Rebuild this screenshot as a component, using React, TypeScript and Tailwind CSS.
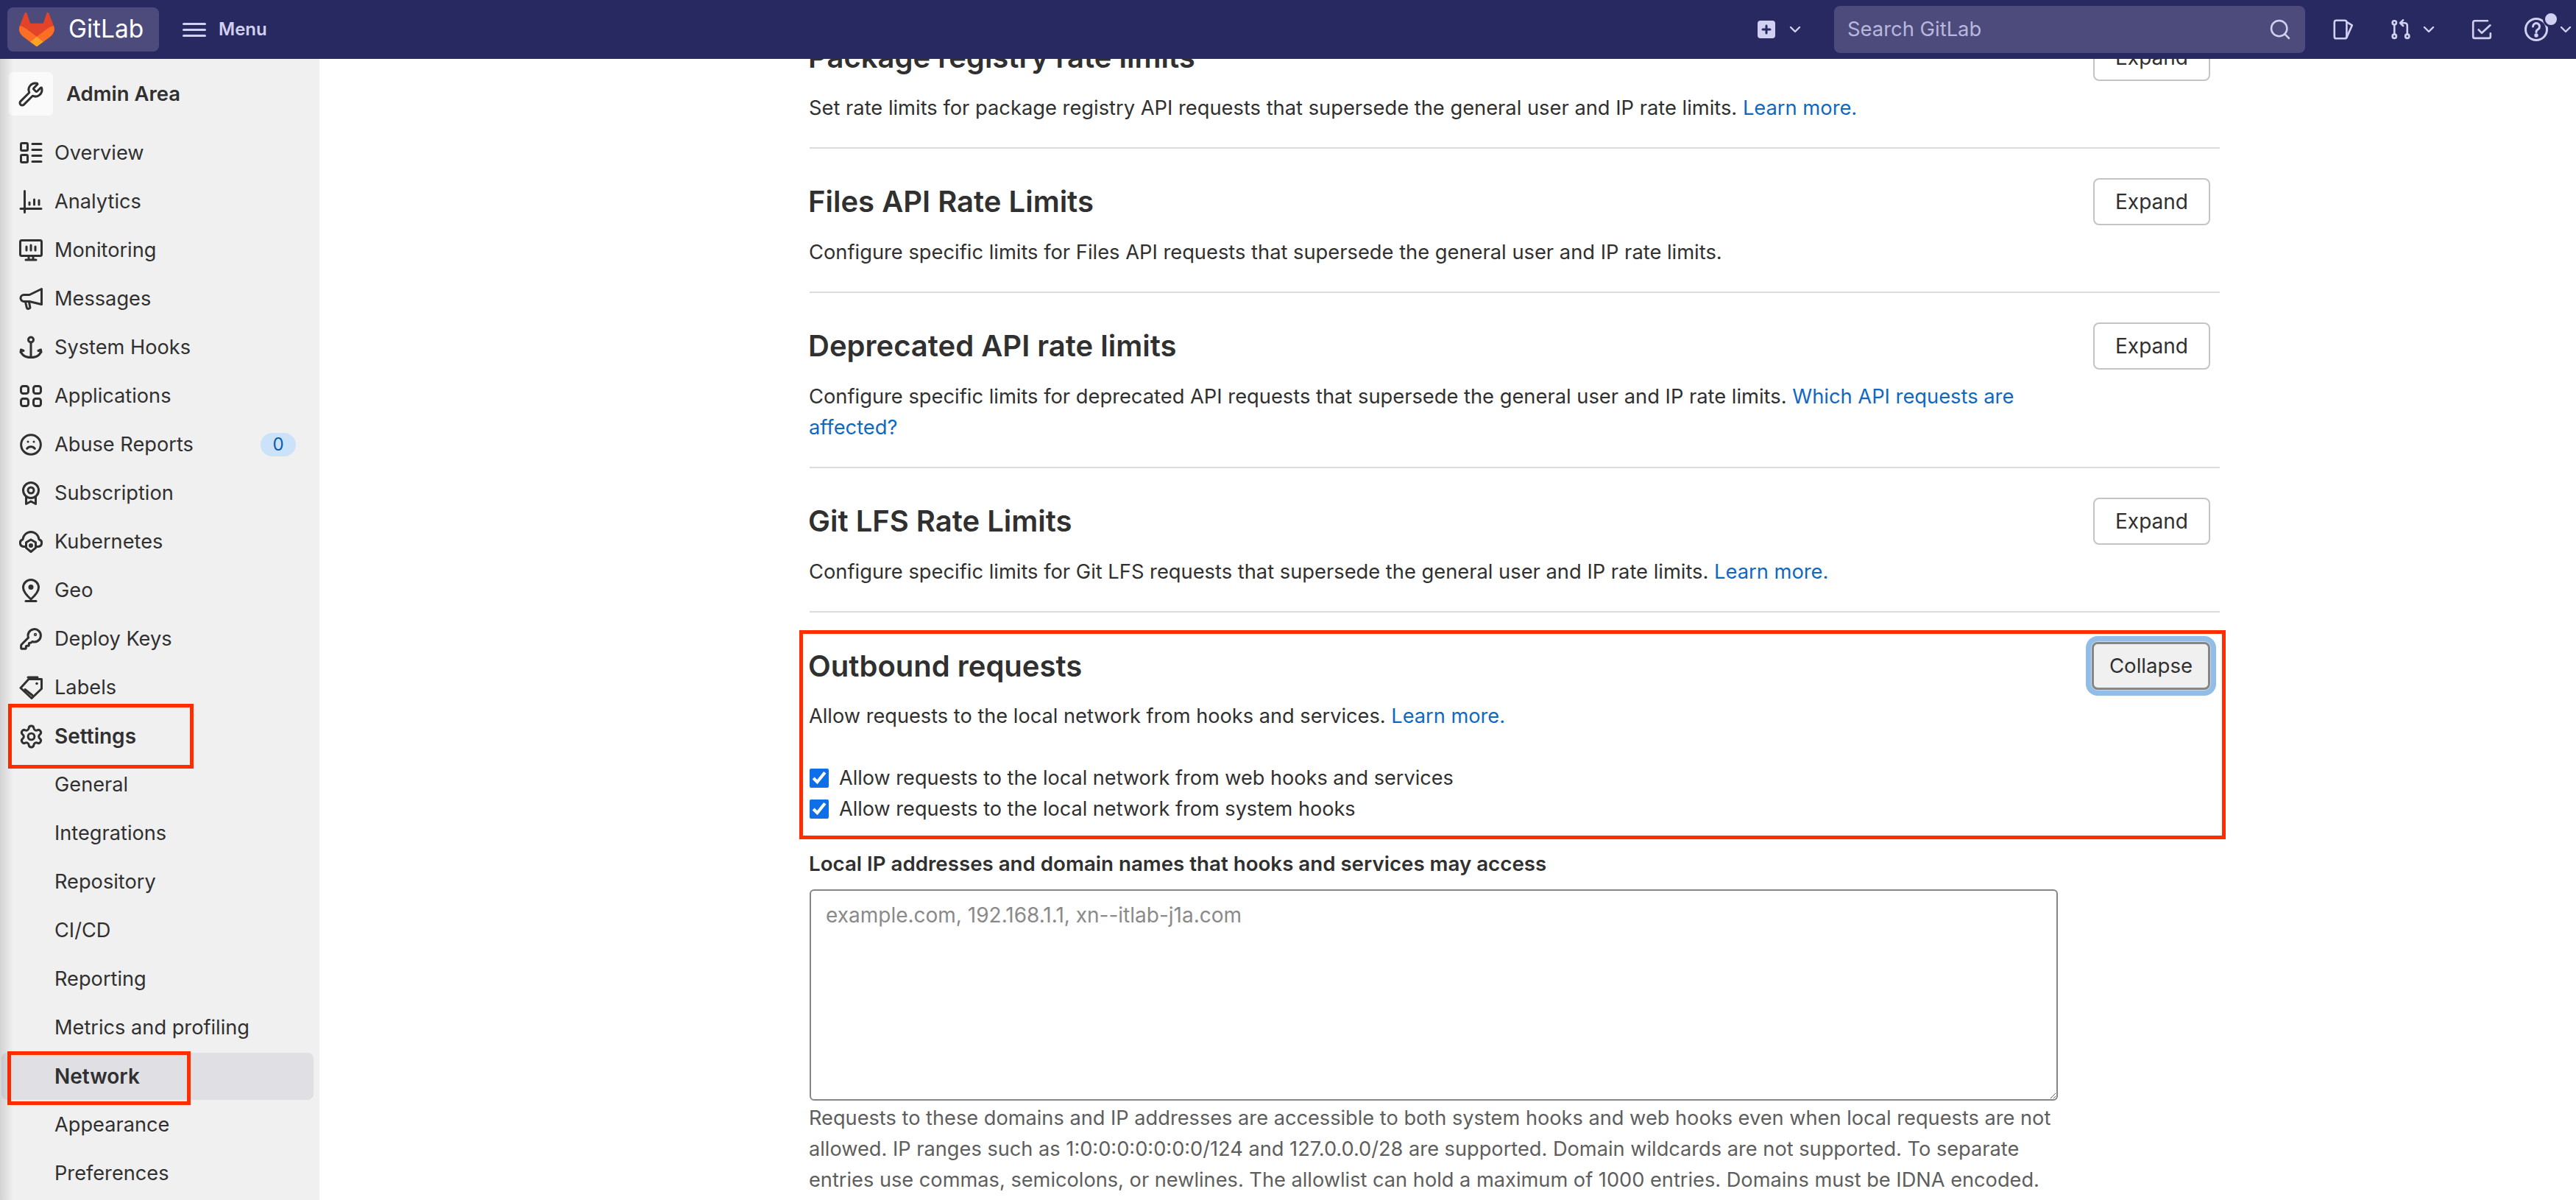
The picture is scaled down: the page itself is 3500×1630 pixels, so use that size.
import React from 'react';
import { ChevronDown, Frown, KeyRound, Search, Settings, Wrench } from 'lucide-react';

const Glyph: React.FC<{ children: React.ReactNode; className?: string }> = ({ children, className }) => (
  <svg
    viewBox="0 0 16 16"
    fill="none"
    stroke="currentColor"
    strokeWidth={1.5}
    strokeLinecap="round"
    strokeLinejoin="round"
    className={className ?? 'w-[32px] h-[32px] shrink-0'}
  >
    {children}
  </svg>
);

const OverviewIcon = () => (
  <Glyph>
    <rect x="1.25" y="1.25" width="4.5" height="5" rx="0.75" />
    <rect x="1.25" y="9.25" width="4.5" height="5" rx="0.75" />
    <path d="M9 1.75h6M9 5.75h6M9 9.75h6M9 13.75h6" />
  </Glyph>
);
const AnalyticsIcon = () => (
  <Glyph>
    <path d="M3.75 .75v14.5M1 12.75h14M7 8.5v1.5M10.25 6.5v3.5M13.5 7v3" />
  </Glyph>
);
const MonitoringIcon = () => (
  <Glyph>
    <rect x="0.75" y="1.25" width="14.5" height="10.5" rx="1" />
    <path d="M5 5.5v2.5M8 4.5v3.5M11 5.5v2.5M6.5 12v2.25M9.5 12v2.25M4.5 14.5h7" />
  </Glyph>
);
const MessagesIcon = () => (
  <Glyph>
    <path d="M15.25 1.25v10.5L7 9.75H3.25a2.25 2.25 0 0 1 0-4.5H7z" />
    <path d="M4.25 10l1 4.25c.2.8 2.4.4 2.2-.5L6.75 10.25" />
  </Glyph>
);
const HooksIcon = () => (
  <Glyph>
    <circle cx="8" cy="2.75" r="1.75" />
    <path d="M8 4.5v10.25M1.25 9.5c-.25 3 2.25 5.25 6.75 5.25s7-2.25 6.75-5.25M1 11.25l.25-1.75 1.75.75M15 11.25l-.25-1.75-1.75.75" />
  </Glyph>
);
const ApplicationsIcon = () => (
  <Glyph>
    <rect x="1.25" y="1.25" width="5" height="5" rx="1.5" />
    <rect x="9.75" y="1.25" width="5" height="5" rx="1.5" />
    <rect x="1.25" y="9.75" width="5" height="5" rx="1.5" />
    <rect x="9.75" y="9.75" width="5" height="5" rx="1.5" />
  </Glyph>
);
const SubscriptionIcon = () => (
  <Glyph>
    <circle cx="8" cy="6" r="5.25" />
    <circle cx="8" cy="6" r="2" />
    <path d="M4.75 10.5v4.75L8 13.5l3.25 1.75V10.5" />
  </Glyph>
);
const KubernetesIcon = () => (
  <Glyph>
    <path d="M4 11.25H3a2.5 2.5 0 0 1-.5-4.9A5.6 5.6 0 0 1 8 1.25a5.6 5.6 0 0 1 5.5 5.1 2.5 2.5 0 0 1-.5 4.9h-1" />
    <path d="M8 6.5l3.25 1.9v3.7L8 14.75 4.75 12.1V8.4z" />
    <circle cx="8" cy="10.5" r="0.75" fill="currentColor" />
  </Glyph>
);
const GeoIcon = () => (
  <Glyph>
    <path d="M8 .75a5.25 5.25 0 0 0-5.25 5.25c0 2.6 2.75 5.75 5.25 8 2.5-2.25 5.25-5.4 5.25-8A5.25 5.25 0 0 0 8 .75z" />
    <circle cx="8" cy="5.75" r="1.75" fill="currentColor" stroke="none" />
    <path d="M4.5 15.25h7" />
  </Glyph>
);
const LabelsIcon = () => (
  <Glyph>
    <path d="M6.5 2.25h8.75v6.5L8.5 15.25 1 8.25z" />
    <path d="M6 1h6.5M4 9.25l5 4" />
    <circle cx="12" cy="5.25" r="0.9" fill="currentColor" stroke="none" />
  </Glyph>
);
const IssuesIcon = () => (
  <Glyph className="w-[28px] h-[28px] shrink-0">
    <rect x="1" y="1" width="9.5" height="14" rx="1.5" />
    <path d="M10.5 2.25l4.25 2.5-4.25 9.5" />
  </Glyph>
);
const MergeIcon = () => (
  <Glyph className="w-[28px] h-[28px] shrink-0">
    <circle cx="3" cy="2.75" r="1.5" />
    <circle cx="3" cy="13.25" r="1.5" />
    <circle cx="13" cy="13.25" r="1.5" />
    <path d="M3 4.25v7.5M13 11.75V5a2 2 0 0 0-2-2H7.5M9.75 .75L7.5 3l2.25 2.25" />
  </Glyph>
);
const TodoIcon = () => (
  <Glyph className="w-[28px] h-[28px] shrink-0">
    <path d="M12.5 1.25H2.5a1.25 1.25 0 0 0-1.25 1.25v11a1.25 1.25 0 0 0 1.25 1.25h11a1.25 1.25 0 0 0 1.25-1.25V11" />
    <path d="M5.5 8.25l2.5 2.5 6.5-6" />
  </Glyph>
);
const CreateIcon = () => (
  <svg viewBox="0 0 24 24" className="w-[24px] h-[24px] shrink-0">
    <rect width="24" height="24" rx="4" fill="#d1d0f0" />
    <path d="M12 7v10M7 12h10" stroke="#292961" strokeWidth="3" strokeLinecap="round" />
  </svg>
);
const HelpIcon = () => (
  <span className="relative w-[32px] h-[32px] shrink-0">
    <Glyph>
      <circle cx="8" cy="8" r="7.25" />
      <path d="M5.75 6a2.25 2.25 0 1 1 3.5 1.9C8.4 8.4 8 8.9 8 9.75" />
      <circle cx="8" cy="12" r="0.6" fill="currentColor" />
    </Glyph>
    <span className="absolute left-[25px] -top-[9px] w-[22px] h-[22px] rounded-full bg-[#d1d0f0] border-[3px] border-[#292961]" />
  </span>
);

const Tanuki = () => (
  <svg viewBox="0 0 25 24" className="w-[48px] h-[46px] shrink-0">
    <path d="m24.507 9.5-.034-.09L21.082.562a.896.896 0 0 0-1.694.091l-2.29 7.01H7.825L5.535.653a.898.898 0 0 0-1.694-.09L.451 9.411.416 9.5a6.297 6.297 0 0 0 2.09 7.278l.012.01.03.022 5.16 3.867 2.56 1.935 1.554 1.176a1.051 1.051 0 0 0 1.268 0l1.555-1.176 2.56-1.935 5.197-3.89.014-.01A6.297 6.297 0 0 0 24.507 9.5Z" fill="#E24329" />
    <path d="m24.507 9.5-.034-.09a11.44 11.44 0 0 0-4.56 2.051l-7.447 5.632 4.742 3.584 5.197-3.89.014-.01A6.297 6.297 0 0 0 24.507 9.5Z" fill="#FC6D26" />
    <path d="m7.707 20.677 2.56 1.935 1.555 1.176a1.051 1.051 0 0 0 1.268 0l1.555-1.176 2.56-1.935-4.743-3.584-4.755 3.584Z" fill="#FCA326" />
    <path d="M5.01 11.461a11.43 11.43 0 0 0-4.56-2.05L.416 9.5a6.297 6.297 0 0 0 2.09 7.278l.012.01.03.022 5.16 3.867 4.745-3.584-7.444-5.632Z" fill="#FC6D26" />
  </svg>
);

const lucideNav = 'w-[32px] h-[32px] shrink-0';

const navItems: { label: string; icon?: React.ReactNode; badge?: string; bold?: boolean; active?: boolean; mark?: string }[] = [
  { label: 'Overview', icon: <OverviewIcon /> },
  { label: 'Analytics', icon: <AnalyticsIcon /> },
  { label: 'Monitoring', icon: <MonitoringIcon /> },
  { label: 'Messages', icon: <MessagesIcon /> },
  { label: 'System Hooks', icon: <HooksIcon /> },
  { label: 'Applications', icon: <ApplicationsIcon /> },
  { label: 'Abuse Reports', icon: <Frown className={lucideNav} strokeWidth={2.25} />, badge: '0' },
  { label: 'Subscription', icon: <SubscriptionIcon /> },
  { label: 'Kubernetes', icon: <KubernetesIcon /> },
  { label: 'Geo', icon: <GeoIcon /> },
  { label: 'Deploy Keys', icon: <KeyRound className={lucideNav} strokeWidth={2.25} /> },
  { label: 'Labels', icon: <LabelsIcon /> },
  { label: 'Settings', icon: <Settings className="w-[35px] h-[35px] -ml-[1.5px] -mr-[1.5px] shrink-0" strokeWidth={2.05} />, bold: true, mark: 'settings' },
  { label: 'General' },
  { label: 'Integrations' },
  { label: 'Repository' },
  { label: 'CI/CD' },
  { label: 'Reporting' },
  { label: 'Metrics and profiling' },
  { label: 'Network', bold: true, active: true, mark: 'network' },
  { label: 'Appearance' },
  { label: 'Preferences' },
];

const Sidebar = () => (
  <aside className="relative w-[434px] shrink-0 bg-[#f0f0f0] text-[#303030]">
    <div className="flex items-center pl-[12px] pt-[18px] mb-[18px]">
      <div className="w-[60px] h-[59px] rounded-[6px] bg-[#fafafa] flex items-center justify-center">
        <Wrench className="w-[36px] h-[36px]" strokeWidth={2} />
      </div>
      <span className="ml-[18px] text-[27.5px] font-semibold">Admin Area</span>
    </div>
    <ul>
      {navItems.map((item) => (
        <li
          key={item.label}
          className={
            item.active
              ? 'relative h-[64px] my-px ml-[2px] mr-[8px] pl-[72px] rounded-[8px] bg-[#dfdfe4] flex items-center'
              : 'relative h-[66px] pl-[26px] pr-[32px] flex items-center'
          }
        >
          {item.icon ? <span className="w-[48px] shrink-0 flex">{item.icon}</span> : !item.active && <span className="w-[48px] shrink-0" />}
          <span className={item.bold ? 'text-[28px] font-semibold' : 'text-[27.2px]'}>{item.label}</span>
          {item.badge && (
            <span className="ml-auto w-[48px] h-[32px] rounded-full bg-[#cbe2f9] text-[#0b5cad] text-[24px] flex items-center justify-center">
              {item.badge}
            </span>
          )}
          {item.mark === 'settings' && (
            <span className="absolute left-[11px] -top-[11px] w-[252px] h-[88px] border-[5px] border-[#ff2d00] pointer-events-none" />
          )}
          {item.mark === 'network' && (
            <span className="absolute left-[8px] -top-[2px] w-[249px] h-[73px] border-[5px] border-[#ff2d00] pointer-events-none" />
          )}
        </li>
      ))}
    </ul>
    <div className="absolute left-0 top-0 bottom-0 w-[18px] bg-gradient-to-r from-[#0000001f] to-transparent pointer-events-none" />
  </aside>
);

const Header = () => (
  <header className="relative z-10 h-[80px] shrink-0 bg-[#292961] flex items-center pl-[10px] pr-[6px] text-[#d1d0f0]">
    <div className="w-[206px] h-[60px] rounded-[8px] bg-[#4c4b7c] flex items-center pl-[16px]">
      <Tanuki />
      <span className="ml-[19px] text-[33.5px] text-white leading-none">GitLab</span>
    </div>
    <div className="ml-[32px] flex flex-col gap-[5px] w-[32px]">
      <span className="h-[3px] rounded bg-[#d1d0f0]" />
      <span className="h-[3px] rounded bg-[#d1d0f0]" />
      <span className="h-[3px] rounded bg-[#d1d0f0]" />
    </div>
    <span className="ml-[17px] text-[24px] font-semibold">Menu</span>

    <div className="ml-auto flex items-center">
      <CreateIcon />
      <ChevronDown className="ml-[15px] w-[24px] h-[24px]" strokeWidth={2.4} />
      <div className="ml-[41px] w-[640px] h-[64px] rounded-[8px] bg-[#4c4b7c] flex items-center pl-[18px] pr-[18px] justify-between">
        <span className="text-[27.4px] text-[#b9b8dc]">Search GitLab</span>
        <Search className="w-[32px] h-[32px]" strokeWidth={1.9} />
      </div>
      <span className="ml-[38px] flex"><IssuesIcon /></span>
      <span className="ml-[50px] flex"><MergeIcon /></span>
      <ChevronDown className="ml-[12px] w-[24px] h-[24px]" strokeWidth={2.4} />
      <span className="ml-[46px] flex"><TodoIcon /></span>
      <span className="ml-[44px] flex"><HelpIcon /></span>
      <ChevronDown className="ml-[12px] w-[24px] h-[24px] -mr-[4px]" strokeWidth={2.4} />
    </div>
  </header>
);

const Link: React.FC<{ children: React.ReactNode }> = ({ children }) => (
  <a className="text-[#1068bf]">{children}</a>
);

const Section: React.FC<{ title: string; children: React.ReactNode }> = ({ title, children }) => (
  <section className="pt-[40px] pb-[32px] border-b-2 border-[#dcdcdc]">
    <div className="flex items-center justify-between h-[64px] pr-[13px]">
      <h4 className="-ml-[2px] text-[40px] font-semibold text-[#303030]">{title}</h4>
      <button className="w-[159px] h-[64px] rounded-[8px] border-2 border-[#c4c4c4] bg-white text-[28px] text-[#303030]">Expand</button>
    </div>
    <p className="-ml-px mt-[16px] w-[1696px] text-[27.3px] leading-[42px] text-[#303030]">{children}</p>
  </section>
);

const Outbound = () => (
  <section className="relative pt-[40px] text-[#303030]">
    <div className="flex items-center justify-between h-[65px] pr-[13px]">
      <h4 className="-ml-[2px] text-[40px] font-semibold">Outbound requests</h4>
      <button className="w-[161px] h-[65px] rounded-[8px] border-[3px] border-[#868686] bg-[#f0f0f0] text-[27.6px] shadow-[0_0_0_1px_#c6dcf2,0_0_0_8px_#92bde6]">
        Collapse
      </button>
    </div>
    <p className="-ml-px mt-[15px] text-[27.2px] leading-[42px]">
      Allow requests to the local network from hooks and services. <Link>Learn more.</Link>
    </p>
    <div className="mt-[42px]">
      <label className="flex items-center h-[42px] text-[27.1px]">
        <input type="checkbox" defaultChecked className="w-[26px] h-[26px] m-0 accent-[#0f6fe8]" />
        <span className="ml-[14px]">Allow requests to the local network from web hooks and services</span>
      </label>
      <label className="flex items-center h-[42px] text-[27.1px]">
        <input type="checkbox" defaultChecked className="w-[26px] h-[26px] m-0 accent-[#0f6fe8]" />
        <span className="ml-[14px]">Allow requests to the local network from system hooks</span>
      </label>
    </div>
    <label className="-ml-px block mt-[32px] text-[27.7px] leading-[42px] font-semibold">
      Local IP addresses and domain names that hooks and services may access
    </label>
    <textarea
      placeholder="example.com, 192.168.1.1, xn--itlab-j1a.com"
      className="block mt-[14px] w-[1696px] h-[287px] rounded-[6px] border-2 border-[#868686] px-[20px] py-[12px] text-[28px] leading-[42px] outline-none placeholder:text-[#8a8a8a]"
    />
    <p className="-ml-px mt-[3px] w-[1696px] text-[27.2px] leading-[42px] text-[#5e5e5e]">
      Requests to these domains and IP addresses are accessible to both system hooks and web hooks even when local requests are not allowed. IP ranges such as 1:0:0:0:0:0:0:0/124 and 127.0.0.0/28 are supported. Domain wildcards are not supported. To separate entries use commas, semicolons, or newlines. The allowlist can hold a maximum of 1000 entries. Domains must be IDNA encoded.
    </p>
    <div className="absolute -left-[14px] -right-[8px] top-[24px] h-[284px] border-[5px] border-[#ff2d00] pointer-events-none" />
  </section>
);

const App: React.FC = () => (
  <div className="h-[1630px] overflow-hidden flex flex-col bg-white font-['Inter',sans-serif]">
    <Header />
    <div className="flex flex-1 min-h-0">
      <Sidebar />
      <main className="flex-1 min-w-0 overflow-hidden pl-[666px]">
        <div className="w-[1916px] -mt-[74px]">
          <Section title="Package registry rate limits">
            Set rate limits for package registry API requests that supersede the general user and IP rate limits. <Link>Learn more.</Link>
          </Section>
          <Section title="Files API Rate Limits">
            Configure specific limits for Files API requests that supersede the general user and IP rate limits.
          </Section>
          <Section title="Deprecated API rate limits">
            Configure specific limits for deprecated API requests that supersede the general user and IP rate limits. <Link>Which API requests are affected?</Link>
          </Section>
          <Section title="Git LFS Rate Limits">
            Configure specific limits for Git LFS requests that supersede the general user and IP rate limits. <Link>Learn more.</Link>
          </Section>
          <Outbound />
        </div>
      </main>
    </div>
  </div>
);

export default App;
